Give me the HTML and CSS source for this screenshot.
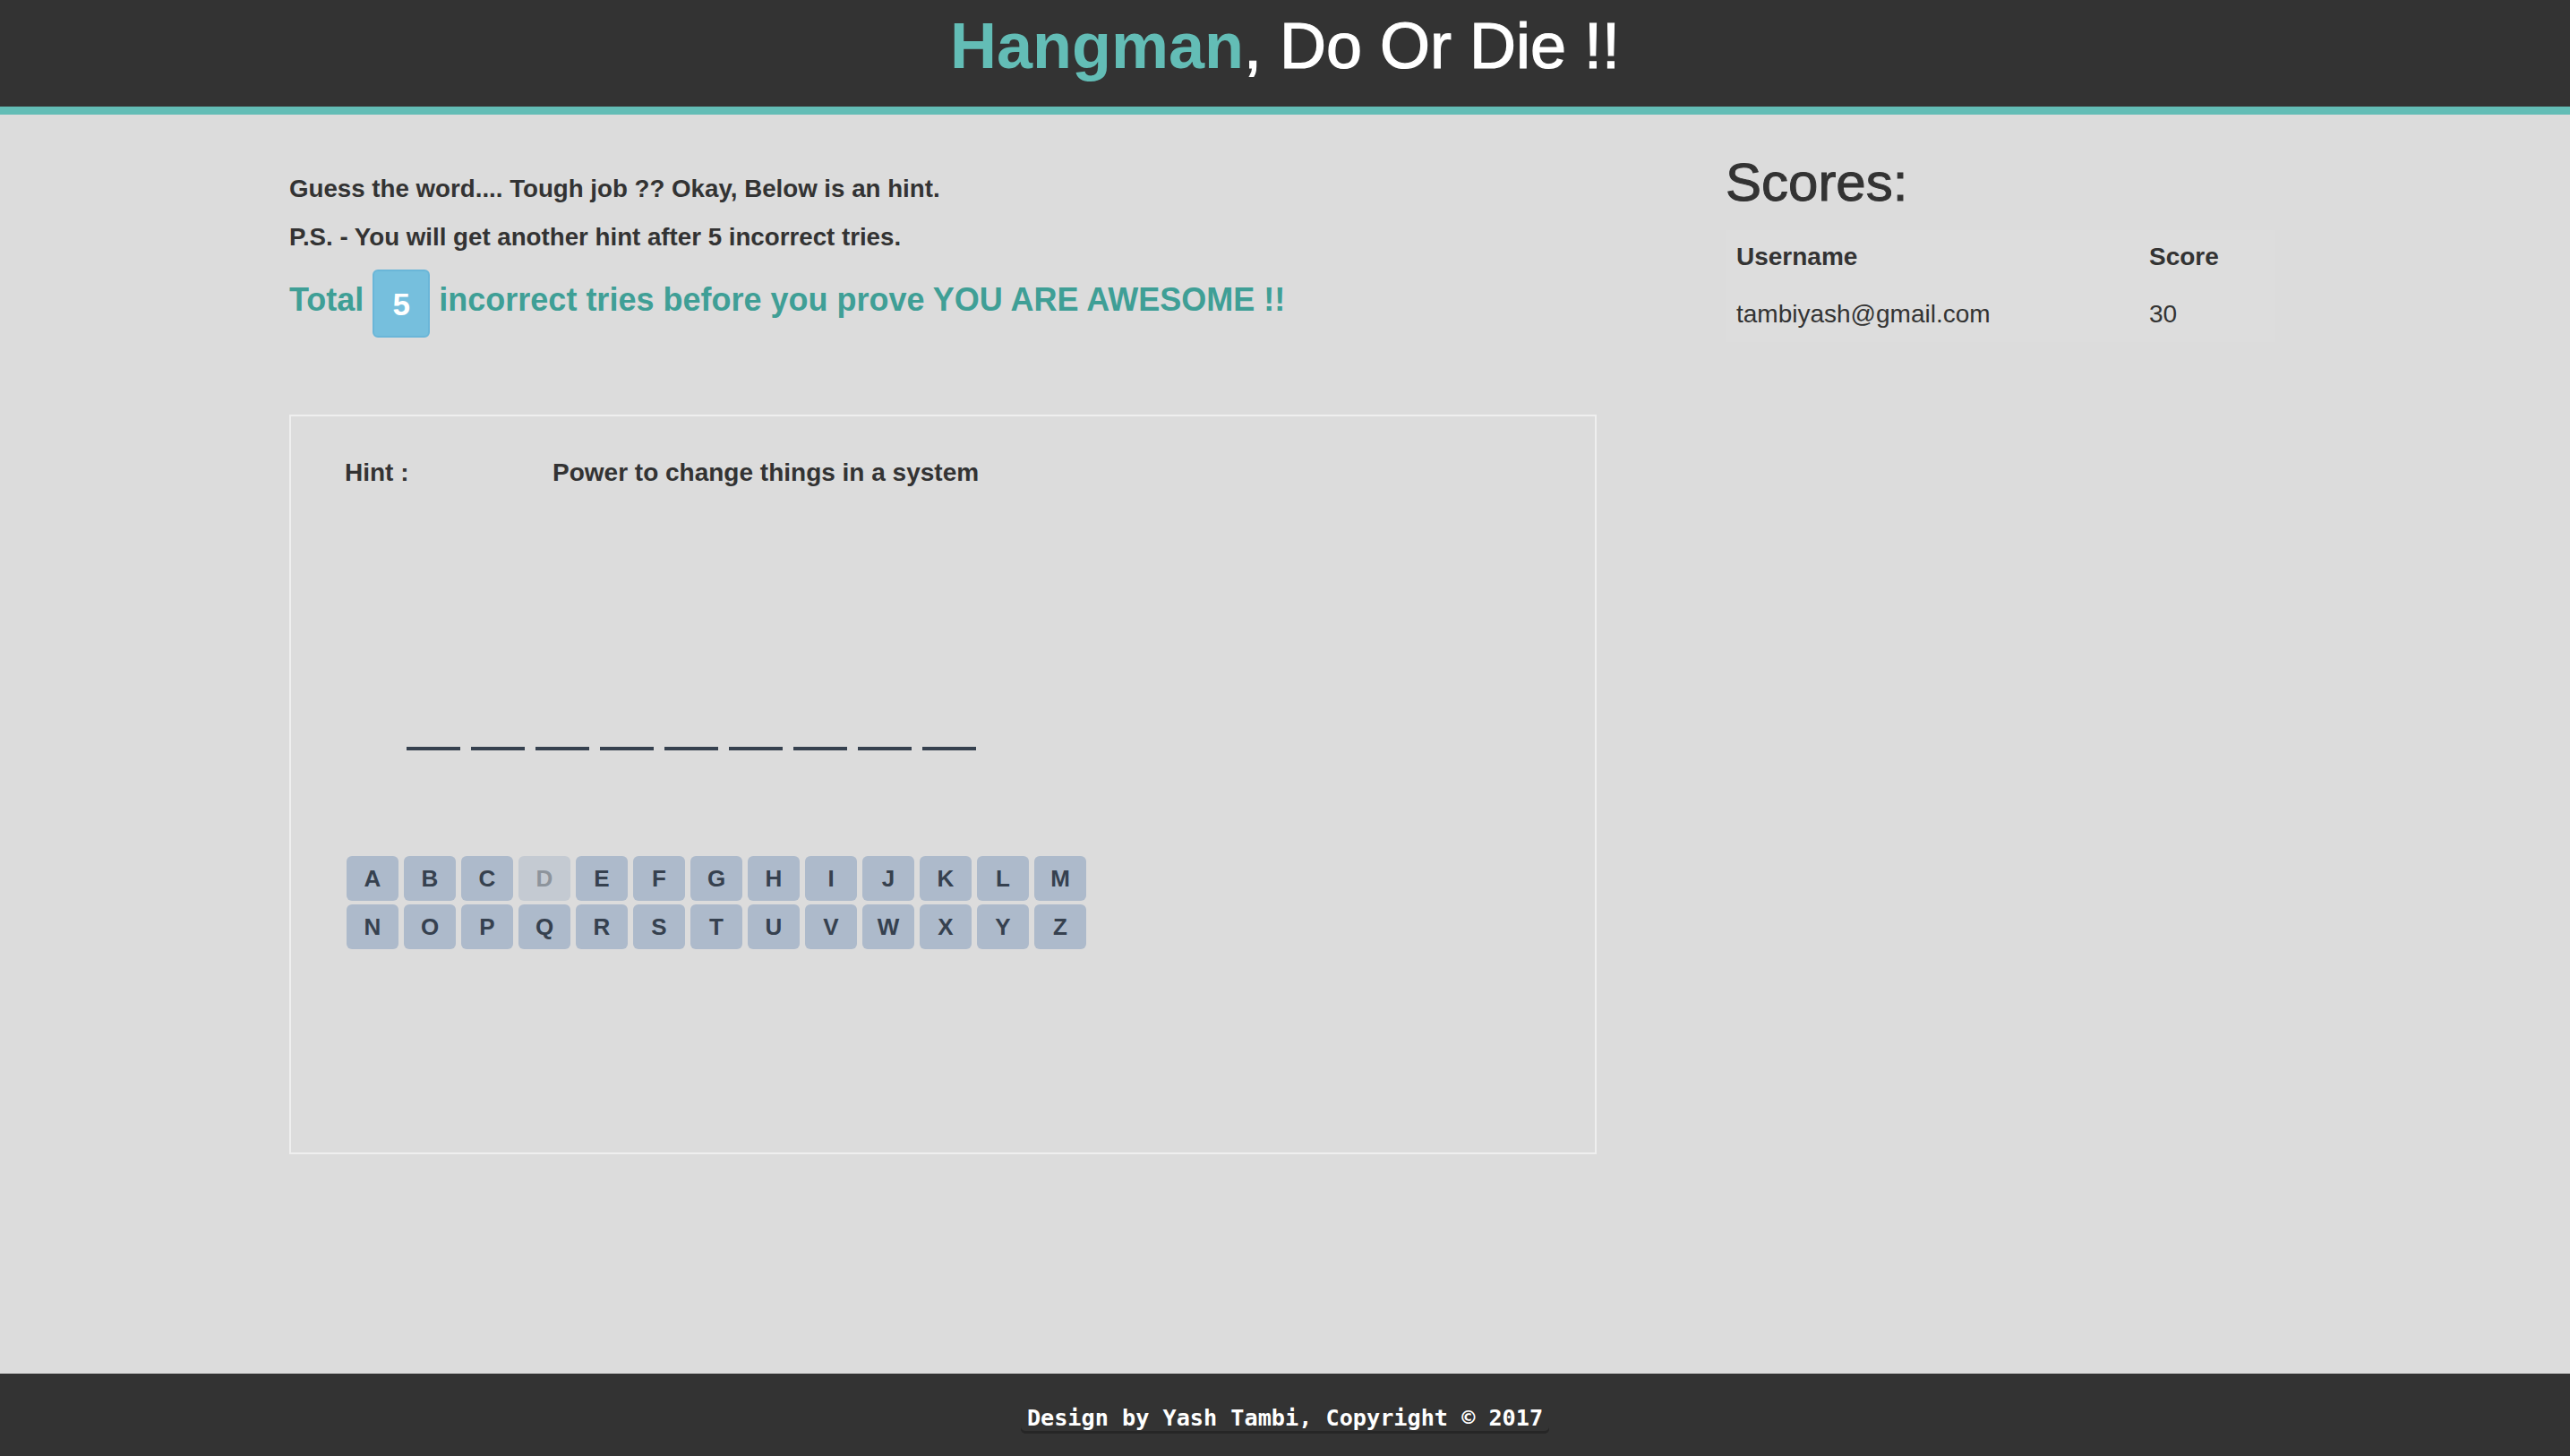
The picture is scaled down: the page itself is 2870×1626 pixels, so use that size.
FILE: index.html
```html
<!DOCTYPE html>
<html lang="en">
<head>
<meta charset="utf-8">
<title>Hangman, Do Or Die !!</title>
<link rel="stylesheet" href="styles.css">
</head>
<body>
<header class="site-header">
  <h1 class="title"><span class="title-accent">Hangman</span>, Do Or Die !!</h1>
</header>
<main class="main">
  <section class="game-col">
    <p class="intro">Guess the word.... Tough job ?? Okay, Below is an hint.</p>
    <p class="intro">P.S. - You will get another hint after 5 incorrect tries.</p>
    <div class="tries">
      <span class="tries-text">Total</span>
      <span class="badge">5</span>
      <span class="tries-text">incorrect tries before you prove YOU ARE AWESOME !!</span>
    </div>
    <div class="board">
      <div class="hint">
        <span class="hint-label">Hint :</span>
        <span class="hint-text">Power to change things in a system</span>
      </div>
      <div class="blanks">
        <span class="blank"></span><span class="blank"></span><span class="blank"></span>
        <span class="blank"></span><span class="blank"></span><span class="blank"></span>
        <span class="blank"></span><span class="blank"></span><span class="blank"></span>
      </div>
      <div class="keys">
        <div class="key-row">
          <button class="key">A</button><button class="key">B</button><button class="key">C</button><button class="key key-used" disabled>D</button><button class="key">E</button><button class="key">F</button><button class="key">G</button><button class="key">H</button><button class="key">I</button><button class="key">J</button><button class="key">K</button><button class="key">L</button><button class="key">M</button>
        </div>
        <div class="key-row">
          <button class="key">N</button><button class="key">O</button><button class="key">P</button><button class="key">Q</button><button class="key">R</button><button class="key">S</button><button class="key">T</button><button class="key">U</button><button class="key">V</button><button class="key">W</button><button class="key">X</button><button class="key">Y</button><button class="key">Z</button>
        </div>
      </div>
    </div>
  </section>
  <aside class="score-col">
    <h2 class="scores-title">Scores:</h2>
    <table class="scores">
      <thead>
        <tr class="head-row"><th class="col-user">Username</th><th>Score</th></tr>
      </thead>
      <tbody>
        <tr class="body-row"><td class="col-user">tambiyash@gmail.com</td><td>30</td></tr>
      </tbody>
    </table>
  </aside>
</main>
<footer class="site-footer">
  <span class="kbd">Design by Yash Tambi, Copyright © 2017</span>
</footer>
</body>
</html>
```
FILE: styles.css
```css
* { box-sizing: border-box; }
html, body { margin: 0; padding: 0; }
body {
  background: #dcdcdc;
  color: #333333;
  font-family: "Liberation Sans", Arial, sans-serif;
  min-height: 100vh;
  display: flex;
  flex-direction: column;
}
.site-header {
  background: #333333;
  border-bottom: 9px solid #63bdb6;
  height: 128px;
  padding-top: 15px;
}
.title {
  margin: 0;
  text-align: center;
  font-size: 72px;
  line-height: 72px;
  font-weight: 400;
  color: #ffffff;
  -webkit-text-stroke: 1.2px #ffffff;
}
.title-accent { color: #63bdb6; font-weight: 700; -webkit-text-stroke: 0; }

.main {
  flex: 1;
  display: flex;
  padding-left: 323px;
}
.game-col { width: 1460px; padding-top: 63.5px; }
.intro {
  margin: 0 0 16px 0;
  font-size: 27.7px;
  line-height: 38px;
  font-weight: 700;
  color: #333333;
}
.tries {
  display: flex;
  align-items: center;
  margin-top: -6.6px;
  gap: 10px;
  color: #3f9f96;
}
.tries-text { font-size: 36px; line-height: 35px; font-weight: 700; }
.badge {
  margin-top: 8px;
  width: 64px;
  height: 76px;
  display: flex;
  align-items: center;
  justify-content: center;
  background: #76bfdd;
  border: 2px solid #6ab6d8;
  border-radius: 6px;
  color: #ffffff;
  font-size: 35px;
  line-height: 35px;
  font-weight: 700;
  padding-top: 2px;
}
.board {
  margin-top: 86px;
  height: 826px;
  border: 2px solid #efefef;
  padding-top: 44.3px;
}
.hint {
  display: flex;
  font-size: 28px;
  line-height: 38px;
  font-weight: 700;
  color: #333333;
  padding-left: 60px;
}
.hint-label { width: 232px; }
.blanks {
  display: flex;
  gap: 12px;
  margin-top: 286.4px;
  margin-left: 129px;
}
.blank { width: 60px; height: 4px; background: #36414f; }
.keys {
  margin-top: 118px;
  margin-left: 62px;
  display: flex;
  flex-direction: column;
  gap: 4px;
}
.key-row { display: flex; gap: 6px; }
.key {
  width: 58px;
  height: 50px;
  border: 0;
  border-radius: 6px;
  background: #adbacb;
  color: #36414f;
  font-family: "Liberation Sans", Arial, sans-serif;
  font-size: 26px;
  font-weight: 700;
  padding: 2px 0 0 0;
}
.key-used { background: #c4cad2; color: #8d949c; }

.score-col { margin-left: 144px; padding-top: 46.2px; }
.scores-title {
  margin: 0;
  font-size: 60px;
  line-height: 60px;
  font-weight: 400;
  color: #333333;
  -webkit-text-stroke: 1px #333333;
}
.scores {
  margin-top: 22.8px;
  width: 614px;
  border-collapse: collapse;
  background: #dddddd;
  font-size: 28px;
  color: #333333;
}
.scores th, .scores td {
  text-align: left;
  vertical-align: middle;
  padding: 0 0 0 12px;
}
.scores td { padding-top: 3px; }
.scores th { font-weight: 700; font-size: 28px; padding-top: 1px; }
.head-row { height: 60px; }
.body-row { height: 65px; }
.col-user { width: 461px; }

.site-footer {
  background: #333333;
  height: 92px;
  display: flex;
  align-items: center;
  justify-content: center;
  padding-top: 8px;
}
.kbd {
  font-family: "DejaVu Sans Mono", "Liberation Mono", monospace;
  font-weight: 700;
  font-size: 25.2px;
  color: #ffffff;
  padding: 2px 7px 3px;
  border-radius: 5px;
  box-shadow: inset 0 -3px 0 rgba(0, 0, 0, 0.25);
}
```
